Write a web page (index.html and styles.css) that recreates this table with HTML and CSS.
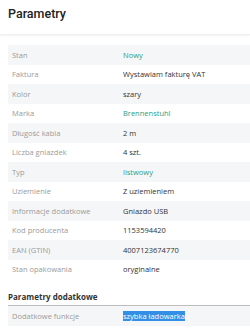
FILE: index.html
```html
<!DOCTYPE html>
<html lang="pl">
<head>
    <meta charset="UTF-8">
    <meta name="viewport" content="width=device-width, initial-scale=1.0">
    <title>Parametry</title>
    <link rel="stylesheet" href="styles.css">
</head>
<body>
    <header class="top">
        <h1>Parametry</h1>
    </header>
    <section class="params">
        <table class="param-table">
            <tr><td class="name">Stan</td><td class="val link">Nowy</td></tr>
            <tr><td class="name">Faktura</td><td class="val">Wystawiam fakturę VAT</td></tr>
            <tr><td class="name">Kolor</td><td class="val">szary</td></tr>
            <tr><td class="name">Marka</td><td class="val link">Brennenstuhl</td></tr>
            <tr><td class="name">Długość kabla</td><td class="val">2 m</td></tr>
            <tr><td class="name">Liczba gniazdek</td><td class="val">4 szt.</td></tr>
            <tr><td class="name">Typ</td><td class="val link">listwowy</td></tr>
            <tr><td class="name">Uziemienie</td><td class="val">Z uziemieniem</td></tr>
            <tr><td class="name">Informacje dodatkowe</td><td class="val">Gniazdo USB</td></tr>
            <tr><td class="name">Kod producenta</td><td class="val">1153594420</td></tr>
            <tr><td class="name">EAN (GTIN)</td><td class="val">4007123674770</td></tr>
            <tr><td class="name">Stan opakowania</td><td class="val">oryginalne</td></tr>
        </table>

        <h2>Parametry dodatkowe</h2>
        <table class="param-table extra">
            <tr><td class="name">Dodatkowe funkcje</td><td class="val"><span class="selected">szybka ładowarka</span></td></tr>
        </table>
    </section>
</body>
</html>
```

FILE: styles.css
```css
/* Global styles */
body {
    margin: 0;
    font-family: 'Open Sans', sans-serif;
    background-color: #fff;
    color: #333;
}

/* Header */
.top {
    height: 34px;
    padding: 0 8px;
    display: flex;
    align-items: center;
    box-shadow: 0 1px 2px rgba(0, 0, 0, 0.06);
    border-bottom: 1px solid #f0f0f0;
}

.top h1 {
    margin: 0 0 7px;
    font-family: 'Roboto', sans-serif;
    font-size: 12.5px;
    font-weight: 500;
    color: #222;
}

/* Parameters list */
.params {
    padding: 10px 0 0 8px;
}

.param-table {
    width: 100%;
    border-collapse: collapse;
    font-size: 7.5px;
}

.param-table tr {
    height: 19.5px;
}

.param-table tr:nth-child(odd) {
    background-color: #f5f6f7;
}

.param-table td {
    padding: 0;
    vertical-align: middle;
}

.param-table td.name {
    width: 111px;
    padding-left: 4px;
    color: #9a9a9a;
}

.param-table td.val {
    color: #333;
}

.param-table td.link {
    color: #2a9d89;
}

.params h2 {
    margin: 12px 0 0;
    padding-bottom: 3px;
    font-size: 8px;
    font-weight: 700;
    color: #333;
    border-bottom: 1px solid #bdbdbd;
}

.selected {
    background-color: #338fe6;
    color: #fff;
}
```
